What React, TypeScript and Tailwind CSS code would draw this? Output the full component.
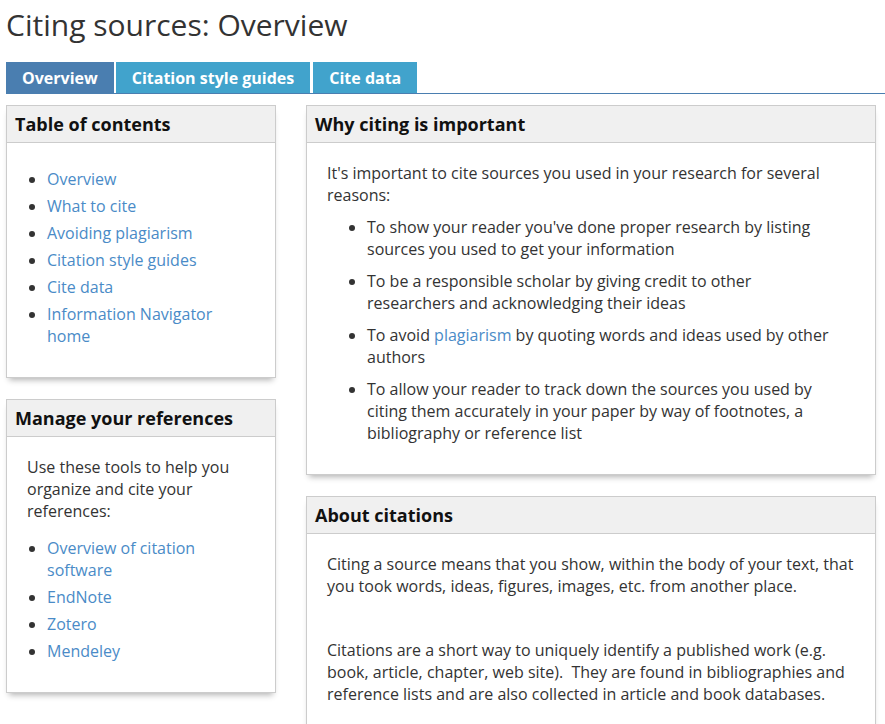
import React from "react";

const FONT = { fontFamily: '"Open Sans", "Noto Sans", Arial, sans-serif' };

const TABS = [
  { label: "Overview", active: true },
  { label: "Citation style guides", active: false },
  { label: "Cite data", active: false },
];

const TOC = [
  "Overview",
  "What to cite",
  "Avoiding plagiarism",
  "Citation style guides",
  "Cite data",
  "Information Navigator home",
];

const TOOLS = ["Overview of citation software", "EndNote", "Zotero", "Mendeley"];

const Box: React.FC<{ title: string; children: React.ReactNode }> = ({ title, children }) => (
  <div className="border border-[#cccccc] bg-white shadow-[0_5px_6px_-3px_rgba(0,0,0,0.3)]">
    <div className="h-[37px] border-b border-[#cccccc] bg-[#f0f0f0] px-[8px] flex items-center">
      <h2 className="text-[18px] font-bold text-[#111]">{title}</h2>
    </div>
    {children}
  </div>
);

const Link: React.FC<{ children: React.ReactNode }> = ({ children }) => (
  <a href="#" className="text-[#4a8bc7]">
    {children}
  </a>
);

export default function App() {
  return (
    <div style={FONT} className="w-[885px] bg-white text-[16px] leading-[22px] text-[#333]">
      <h1 className="pl-[6px] pt-[5px] text-[30px] leading-[40px] text-[#333]">Citing sources: Overview</h1>

      {/* Tabs */}
      <div className="mt-[17px] ml-[6px] flex items-end border-b border-[#4a7eb0]">
        {TABS.map((t, i) => (
          <div
            key={t.label}
            className={
              (t.active ? "bg-[#4a7eb0]" : "bg-[#41a3cc]") +
              " h-[31px] px-[16px] flex items-center text-white font-bold text-[16px] " +
              (i === 1 ? "mr-[3px]" : "mr-[2px]")
            }
          >
            {t.label}
          </div>
        ))}
      </div>

      <div className="mt-[11px] ml-[6px] flex gap-[30px] items-start">
        {/* Left column */}
        <div className="w-[270px] flex flex-col gap-[21px]">
          <Box title="Table of contents">
            <ul className="list-disc pl-[40px] pt-[25px] pb-[30px] pr-[20px] flex flex-col gap-[5px]">
              {TOC.map((t) => (
                <li key={t}>
                  <Link>{t}</Link>
                </li>
              ))}
            </ul>
          </Box>
          <Box title="Manage your references">
            <div className="px-[20px] pt-[19px] pb-[30px]">
              <p>Use these tools to help you organize and cite your references:</p>
              <ul className="list-disc pl-[20px] mt-[15px] flex flex-col gap-[5px]">
                {TOOLS.map((t) => (
                  <li key={t}>
                    <Link>{t}</Link>
                  </li>
                ))}
              </ul>
            </div>
          </Box>
        </div>

        {/* Right column */}
        <div className="w-[570px] flex flex-col gap-[21px]">
          <Box title="Why citing is important">
            <div className="px-[20px] pt-[19px] pb-[30px]">
              <p>It's important to cite sources you used in your research for several reasons:</p>
              <ul className="list-disc pl-[40px] pr-[12px] mt-[10px] flex flex-col gap-[10px]">
                <li>To show your reader you've done proper research by listing sources you used to get your information</li>
                <li>To be a responsible scholar by giving credit to other researchers and acknowledging their ideas</li>
                <li>
                  To avoid <Link>plagiarism</Link> by quoting words and ideas used by other authors
                </li>
                <li>
                  To allow your reader to track down the sources you used by citing them accurately in your paper by way
                  of footnotes, a bibliography or reference list
                </li>
              </ul>
            </div>
          </Box>
          <Box title="About citations">
            <div className="px-[20px] pt-[19px] pb-[30px]">
              <p>
                Citing a source means that you show, within the body of your text, that you took words, ideas, figures,
                images, etc. from another place.
              </p>
              <p className="mt-[42px]">
                Citations are a short way to uniquely identify a published work (e.g. book, article, chapter, web
                site).&nbsp; They are found in bibliographies and reference lists and are also collected in article and
                book databases.
              </p>
            </div>
          </Box>
        </div>
      </div>
    </div>
  );
}
